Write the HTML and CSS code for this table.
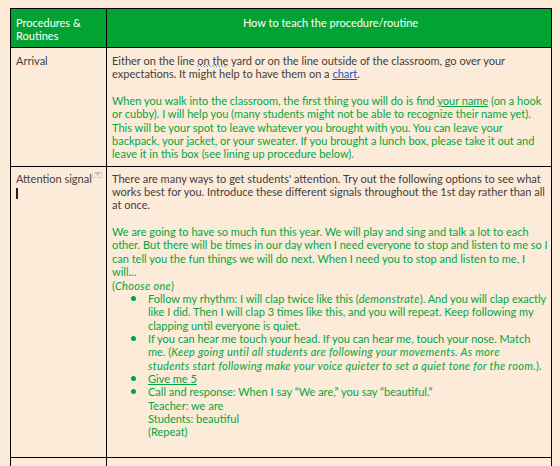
FILE: index.html
```html
<!DOCTYPE html>
<html>
<head>
<meta charset="utf-8">
<link rel="stylesheet" href="styles.css">
</head>
<body>
<table class="doc">
  <colgroup><col class="c1"><col class="c2"></colgroup>
  <tr class="head">
    <th class="left">Procedures &amp;<br>Routines</th>
    <th class="center">How to teach the procedure/routine</th>
  </tr>
  <tr class="row-arrival">
    <td>Arrival</td>
    <td class="body">
      <p class="gray">Either on the line <span class="spell">on the</span> yard or on the line outside of the classroom, go over your<br>expectations. It might help to have them on a <a class="link" href="#">chart</a>.</p>
      <p class="green">When you walk into the classroom, the first thing you will do is find <u>your name</u> (on a hook<br>or cubby). I will help you (many students might not be able to recognize their name yet).<br>This will be your spot to leave whatever you brought with you. You can leave your<br>backpack, your jacket, or your sweater. If you brought a lunch box, please take it out and<br>leave it in this box (see lining up procedure below).</p>
    </td>
  </tr>
  <tr class="row-attn">
    <td class="attn-cell">
      <div class="attn-label">Attention signal<span class="dd"><svg width="7" height="4" viewBox="0 0 7 4"><path d="M0 0h7L3.5 4z" fill="#c9c3bd"/></svg></span></div>
      <span class="caret"></span>
    </td>
    <td class="body">
      <p class="gray">There are many ways to get students' attention. Try out the following options to see what<br>works best for you. Introduce these different signals throughout the 1st day rather than all<br>at once.</p>
      <p class="green nomb">We are going to have so much fun this year. We will play and sing and talk a lot to each<br>other. But there will be times in our day when I need everyone to stop and listen to me so I<br>can tell you the fun things we will do next. When I need you to stop and listen to me, I<br>will...<br>(<i>Choose one</i>)</p>
      <ul class="green">
        <li>Follow my rhythm: I will clap twice like this (<i>demonstrate</i>). And you will clap exactly<br>like I did. Then I will clap 3 times like this, and you will repeat. Keep following my<br>clapping until everyone is quiet.</li>
        <li>If you can hear me touch your head. If you can hear me, touch your nose. Match<br>me. (<i>Keep going until all students are following your movements. As more<br>students start following make your voice quieter to set a quiet tone for the room.</i>).</li>
        <li><u>Give me 5</u></li>
        <li>Call and response: When I say “We are,” you say “beautiful.”<br>Teacher: we are<br>Students: beautiful<br>(Repeat)</li>
      </ul>
    </td>
  </tr>
  <tr class="row-last">
    <td></td>
    <td></td>
  </tr>
</table>
</body>
</html>
```
FILE: styles.css
```css
html, body {
  margin: 0;
  padding: 0;
  background: #fdebd9;
}
body {
  padding: 8px 0 0 10px;
  font-family: Lato, "Open Sans", sans-serif;
  font-size: 11px;
  line-height: 13.35px;
  color: #404040;
  overflow: hidden;
  height: 466px;
  box-sizing: border-box;
}
.doc {
  border-collapse: collapse;
  table-layout: fixed;
  width: 541px;
}
.c1 { width: 96px; }
.c2 { width: 445px; }
.doc th, .doc td {
  border: 1px solid #000;
  vertical-align: top;
  padding: 6px 2px 5px 5px;
  text-align: left;
}
.doc td.body { white-space: nowrap; }
.head th {
  background: #02a333;
  color: #fff;
  font-weight: normal;
  height: 25px;
  padding-top: 8px;
  line-height: 12.5px;
}
.head th.center { text-align: center; }
.row-arrival td { height: 106px; padding-top: 6px; }
.row-attn td { height: 280px; padding-top: 5px; }
.row-last td { height: 20px; padding: 0; }
p { margin: 0 0 13.35px 0; }
p:last-child { margin-bottom: 0; }
p.nomb { margin-bottom: 0; }
.gray { color: #404040; }
.green { color: #00a640; }
.green i { letter-spacing: 0.3px; }
.link { color: #1155cc; text-decoration: underline; }
.spell {
  position: relative;
  display: inline-block;
}
.spell::after {
  content: "";
  position: absolute;
  left: 0;
  right: 0;
  bottom: 0;
  height: 2px;
  background:
    repeating-linear-gradient(45deg, transparent 0 1px, #5b8be8 1px 2px, transparent 2px 3px);
  background-size: 3px 2px;
}
ul {
  margin: 0;
  padding-left: 36px;
  list-style: none;
}
ul li { position: relative; }
ul li::before {
  content: "";
  position: absolute;
  left: -17px;
  top: 4px;
  width: 5px;
  height: 5px;
  border-radius: 50%;
  background: #00a640;
}
.attn-label {
  white-space: nowrap;
  overflow: hidden;
  width: 87px;
  position: relative;
}
.dd {
  position: absolute;
  left: 76px;
  top: -3px;
  width: 10px;
  height: 9px;
  border: 1px solid #d9d2cb;
  background: #fdebd9;
  display: flex;
  justify-content: center;
  padding-top: 2px;
  box-sizing: border-box;
}
.dd svg { display: block; }
.caret {
  display: block;
  width: 2px;
  height: 11px;
  background: #222;
  margin-top: 3px;
}
```
